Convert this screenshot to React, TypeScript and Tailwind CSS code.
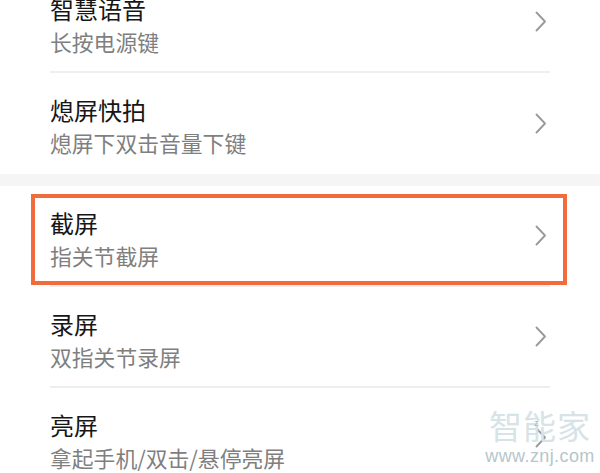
import React from "react";

const sectionA = [
  { title: "智慧语音", sub: "长按电源键" },
  { title: "熄屏快拍", sub: "熄屏下双击音量下键" },
];

const sectionB = [
  { title: "截屏", sub: "指关节截屏", marked: true },
  { title: "录屏", sub: "双指关节录屏" },
  { title: "亮屏", sub: "拿起手机/双击/悬停亮屏" },
];

function Chevron() {
  return (
    <svg width="12" height="21" viewBox="0 0 12 21" className="mr-[3px] shrink-0">
      <path
        d="M1.5 1.5 L10 10.5 L1.5 19.5"
        fill="none"
        stroke="#9b9b9b"
        strokeWidth="1.9"
        strokeLinecap="round"
        strokeLinejoin="round"
      />
    </svg>
  );
}

function Row({
  title,
  sub,
  divider,
  marked,
}: {
  title: string;
  sub: string;
  divider: boolean;
  marked?: boolean;
}) {
  return (
    <div className="relative">
      <div
        className={
          "mx-[50px] h-[101px] flex items-center justify-between " +
          (divider ? "border-b-2 border-[#eeeeee]" : "")
        }
      >
        <div className="self-start pt-[21px] flex flex-col gap-[2px]">
          <span className="text-[24px] leading-[32px] text-[#161616]">{title}</span>
          <span className="text-[21.8px] leading-[30px] text-[#7f7f7f]">{sub}</span>
        </div>
        <Chevron />
      </div>
      {marked && (
        <div className="absolute left-[31px] right-[33px] top-[8px] bottom-[2px] border-4 border-[#f26b3d]" />
      )}
    </div>
  );
}

export default function App() {
  return (
    <div
      className="relative w-[600px] h-[473px] overflow-hidden bg-white"
      style={{ fontFamily: '"Noto Sans CJK SC", "Noto Sans", sans-serif' }}
    >
      <div className="-mt-[28px]">
        {sectionA.map((r, i) => (
          <Row key={r.title} title={r.title} sub={r.sub} divider={i < sectionA.length - 1} />
        ))}
        <div className="h-[12px] bg-[#f5f5f5]" />
        {sectionB.map((r) => (
          <Row key={r.title} title={r.title} sub={r.sub} divider marked={r.marked} />
        ))}
      </div>

      {/* watermark */}
      <div className="absolute left-[489px] top-[405px] w-[102px] flex flex-col items-center pointer-events-none">
        <span className="block text-[33px] leading-[40px] tracking-[1px] text-[#d6e3e7]">智能家</span>
        <span className="block mt-[1px] text-[18px] leading-[20px] tracking-[0.4px] whitespace-nowrap text-[#b6c6cc] font-['Liberation_Sans',Arial,sans-serif]">
          www.znj.com
        </span>
        <span className="absolute left-[45px] top-[13px] text-[9px] leading-none text-[#7cc9d0]">z</span>
      </div>
    </div>
  );
}
